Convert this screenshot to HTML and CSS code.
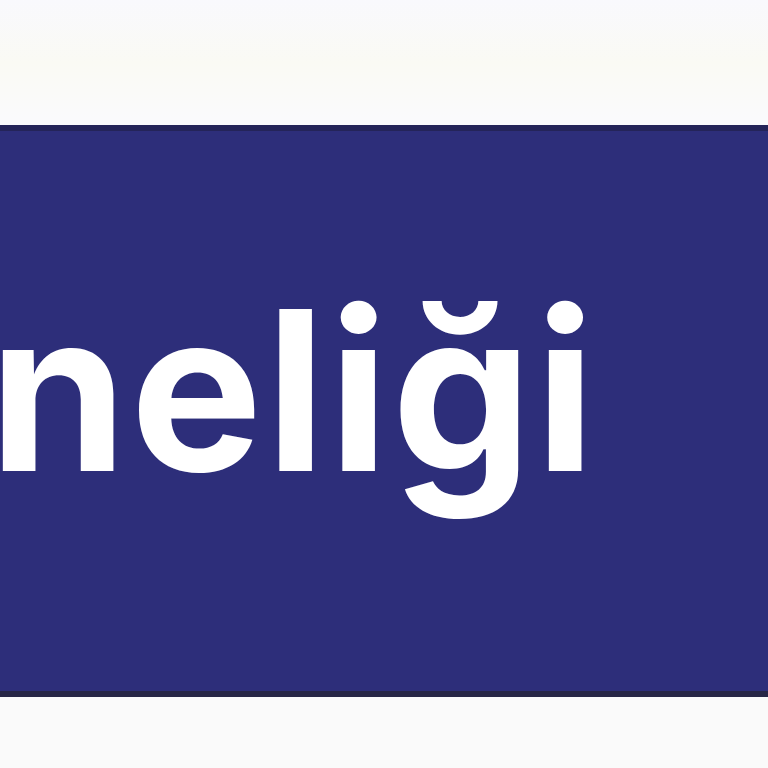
FILE: index.html
```html
<!DOCTYPE html>
<html lang="tr">
<head>
<meta charset="utf-8">
<link rel="stylesheet" href="styles.css">
</head>
<body>
<div class="page">
  <div class="top"></div>
  <div class="band">
    <h1 class="title">neliği</h1>
  </div>
  <div class="bottom"></div>
</div>
</body>
</html>
```

FILE: styles.css
```css
html, body {
  margin: 0;
  padding: 0;
  width: 768px;
  height: 768px;
  overflow: hidden;
  background: #fafafa;
}
.page {
  display: flex;
  flex-direction: column;
  height: 768px;
}
.top {
  height: 125px;
  background: linear-gradient(#f9f9fd, #fafaf4 50%, #fafafd);
}
.band {
  height: 572px;
  background: #2d2e7a;
  border-top: 6px solid #242459;
  border-bottom: 6px solid #272646;
  box-sizing: border-box;
  display: flex;
  align-items: flex-start;
  overflow: hidden;
}
.title {
  margin: 0;
  padding-top: 149px;
  margin-left: -11px;
  font-family: "Inter", "Liberation Sans", sans-serif;
  font-weight: 700;
  font-size: 222px;
  line-height: 1;
  color: #ffffff;
  letter-spacing: 3px;
  white-space: nowrap;
}
.bottom {
  flex: 1;
  background: #fafafa;
}
```
